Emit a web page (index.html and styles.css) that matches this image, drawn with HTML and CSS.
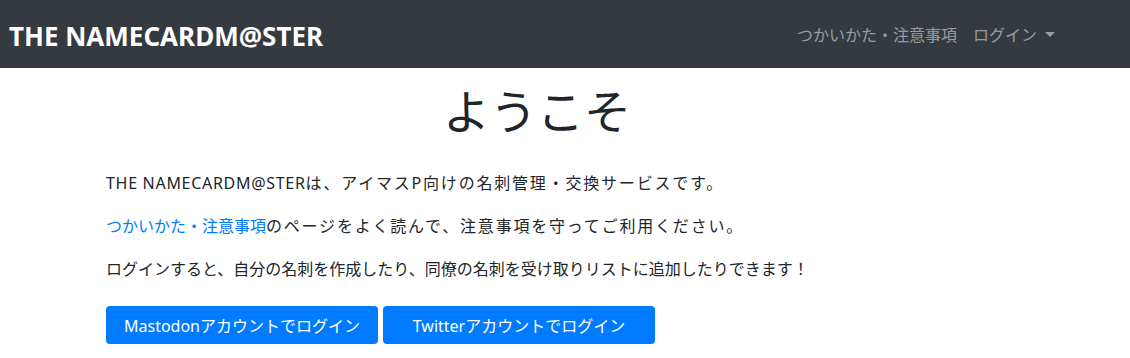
FILE: index.html
```html
<!DOCTYPE html>
<html lang="ja">

<head>
    <meta charset="UTF-8">
    <meta name="viewport" content="width=device-width, initial-scale=1.0">
    <title>THE NAMECARDM@STER</title>
    <link rel="stylesheet" href="styles.css">
</head>

<body>
    <div class="navbar">
        <a href="/" class="brand">THE NAMECARDM@STER</a>
        <ul class="nav">
            <li><a href="/help" class="nav-link">つかいかた・注意事項</a></li>
            <li><a href="#" class="nav-link dropdown-toggle">ログイン</a></li>
        </ul>
    </div>

    <div class="container">
        <h1 class="title">ようこそ</h1>
        <p class="wide"><span class="latin">THE NAMECARDM@STER</span>は、アイマスP向けの名刺管理・交換サービスです。</p>
        <p class="wide"><a href="/help" class="link">つかいかた・注意事項</a>のページをよく読んで、注意事項を守ってご利用ください。</p>
        <p>ログインすると、自分の名刺を作成したり、同僚の名刺を受け取りリストに追加したりできます！</p>
        <div class="login-buttons">
            <a href="/auth/mastodon" class="btn">Mastodonアカウントでログイン</a>
            <a href="/auth/twitter" class="btn">Twitterアカウントでログイン</a>
        </div>
    </div>
</body>

</html>
```

FILE: styles.css
```css
:root {
    --dark: #343a40;
    --primary: #007bff;
    --text: #212529;
}

* {
    margin: 0;
    padding: 0;
    box-sizing: border-box;
}

body {
    font-family: 'Noto Sans', 'Noto Sans CJK JP', sans-serif;
    font-size: 16px;
    color: var(--text);
    background: #fff;
}

a {
    text-decoration: none;
}

.navbar {
    background-color: var(--dark);
    height: 68px;
    display: flex;
    align-items: center;
    justify-content: space-between;
    padding: 0 75px 0 9px;
}

.brand {
    color: #fff;
    font-weight: bold;
    font-size: 26px;
    padding-top: 4px;
}

.nav {
    list-style: none;
    display: flex;
    gap: 16px;
}

.nav-link {
    color: rgba(255, 255, 255, 0.5);
    display: flex;
    align-items: center;
}

.dropdown-toggle::after {
    content: "";
    margin-left: 8px;
    border-top: 5px solid;
    border-left: 5px solid transparent;
    border-right: 5px solid transparent;
}

.container {
    width: 968px;
    padding-left: 106px;
}

.title {
    text-align: center;
    font-size: 47px;
    font-weight: normal;
    line-height: 1.2;
    padding-top: 15px;
    margin-bottom: 30px;
}

.container p {
    line-height: 28px;
    margin-bottom: 15px;
}

/* the japanese glyphs render a little wider on the original page */
.container p.wide {
    letter-spacing: 1.8px;
}

.container p.wide .latin {
    letter-spacing: 0.7px;
}

.container p.wide .link {
    letter-spacing: 0;
}

.link {
    color: var(--primary);
}

.login-buttons {
    display: flex;
    gap: 5px;
    margin-top: 23px;
}

.btn {
    width: 272px;
    height: 38px;
    display: flex;
    align-items: center;
    justify-content: center;
    background-color: var(--primary);
    color: #fff;
    border-radius: 4px;
}
```
